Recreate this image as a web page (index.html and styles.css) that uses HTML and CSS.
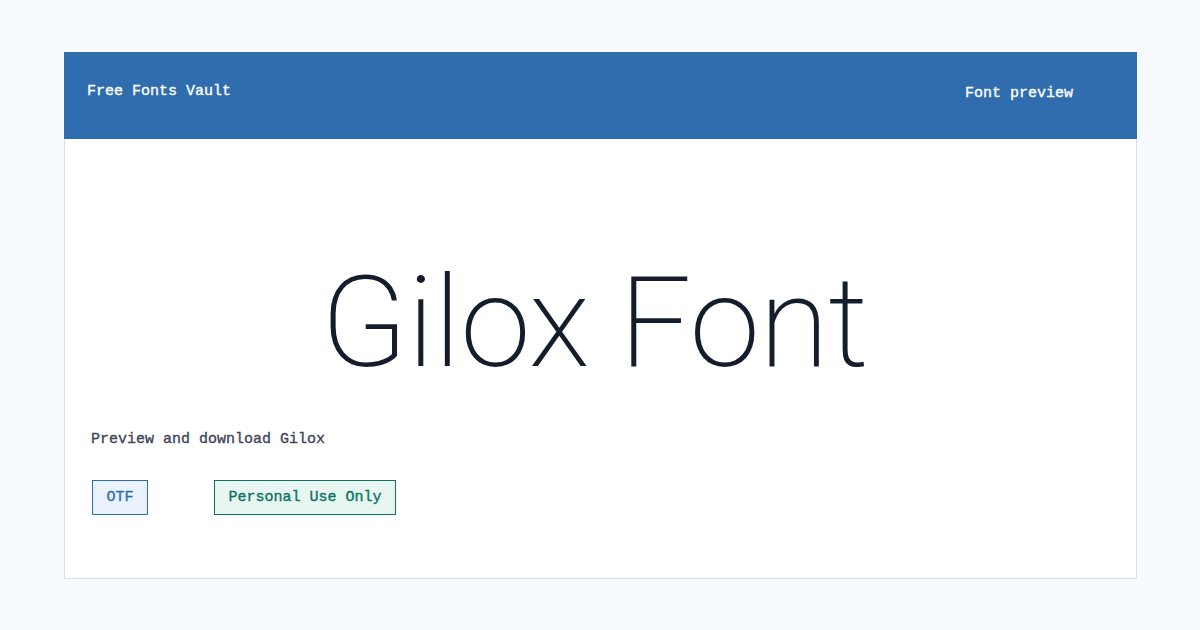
FILE: index.html
```html
<!DOCTYPE html>
<html lang="en">
<head>
    <meta charset="UTF-8">
    <meta name="viewport" content="width=device-width, initial-scale=1.0">
    <title>Gilox Font - Free Fonts Vault</title>
    <link rel="stylesheet" href="styles.css">
</head>
<body>
    <div class="card">
        <header class="topbar">
            <span class="brand">Free Fonts Vault</span>
            <span class="tagline">Font preview</span>
        </header>
        <main class="preview">
            <h1 class="specimen">Gilox Font</h1>
            <p class="intro">Preview and download Gilox</p>
            <div class="badges">
                <span class="badge badge-format">OTF</span>
                <span class="badge badge-license">Personal Use Only</span>
            </div>
        </main>
    </div>
</body>
</html>
```

FILE: styles.css
```css
body {
    margin: 0;
    background-color: #f7faff;
    font-family: "Liberation Mono", "DejaVu Sans Mono", monospace;
    -webkit-text-stroke: 0.35px currentColor;
}
.card {
    width: 1073px;
    margin: 52px 0 0 64px;
}
.topbar {
    height: 87px;
    background-color: #2f6dae;
    color: #fff;
    display: flex;
    align-items: center;
    justify-content: space-between;
    padding: 0 64px 0 23px;
    font-size: 15px;
}
.brand {
    margin-top: -8px;
}
.tagline {
    margin-top: -4px;
}
.preview {
    height: 440px;
    box-sizing: border-box;
    background-color: #fff;
    border: 1px solid #d6e0ee;
    border-top: none;
    padding: 120px 38px 0 26px;
}
.specimen {
    margin: 0;
    text-align: center;
    font-family: Roboto, "Open Sans", sans-serif;
    font-weight: 200;
    font-size: 127px;
    line-height: 128px;
    letter-spacing: -0.6px;
    color: #151c2c;
    -webkit-text-stroke: 0;
}
.intro {
    margin: 43px 0 0 0;
    font-size: 15px;
    line-height: 20px;
    color: #3c4657;
}
.badges {
    display: flex;
    gap: 66px;
    margin-top: 30px;
    padding-left: 1px;
}
.badge {
    display: inline-block;
    padding: 0 13.5px;
    line-height: 33px;
    font-size: 15px;
    border: 1px solid;
}
.badge-format {
    color: #2f6dae;
    background-color: #eaf3fd;
    border-color: #2f6dae;
}
.badge-license {
    color: #0b7362;
    background-color: #e7f6f1;
    border-color: #0b7362;
}
```
